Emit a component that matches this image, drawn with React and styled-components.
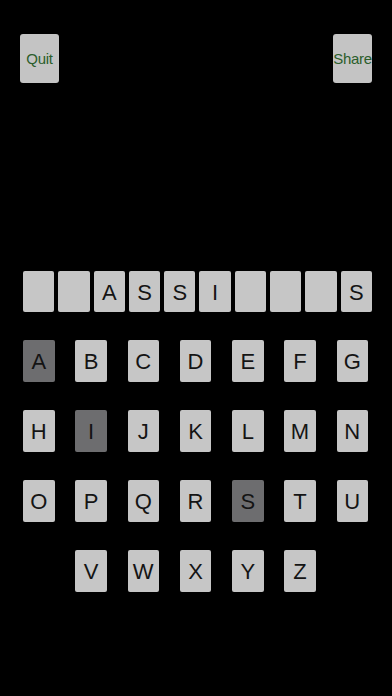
import React from "react";
import styled, { createGlobalStyle } from "styled-components";

const GlobalStyle = createGlobalStyle`
  html, body {
    margin: 0;
    padding: 0;
    background: #000;
  }
  body {
    font-family: "Liberation Sans", Arial, sans-serif;
  }
`;

const Screen = styled.div`
  width: 392px;
  min-height: 696px;
  background: #000;
  display: flex;
  flex-direction: column;
  box-sizing: border-box;
  padding-top: 34px;
`;

const TopBar = styled.div`
  display: flex;
  justify-content: space-between;
  padding: 0 20px;
`;

const BarButton = styled.button`
  width: 39px;
  height: 49px;
  padding: 0;
  border: none;
  border-radius: 3px;
  background: #c4c4c4;
  color: #2b5e2b;
  font-family: "Liberation Sans", Arial, sans-serif;
  font-size: 15px;
  letter-spacing: -0.3px;
  white-space: nowrap;
  display: flex;
  align-items: center;
  justify-content: center;
  overflow: visible;
`;

const WordRow = styled.div`
  display: flex;
  gap: 4px;
  margin-top: 188px;
  padding: 0 20px 0 23px;
`;

const Tile = styled.div`
  box-sizing: border-box;
  height: ${(p) => (p.$slot ? "41px" : "42px")};
  border-radius: 2px;
  background: ${(p) => (p.$used ? "#6d6d6f" : "#c6c6c6")};
  color: #141414;
  font-size: 22px;
  display: flex;
  align-items: center;
  justify-content: center;
  padding-top: 2px;
`;

const Slot = styled(Tile)`
  flex: 1;
`;

const Keyboard = styled.div`
  display: grid;
  grid-template-columns: repeat(7, 31.5px);
  grid-auto-rows: 42px;
  column-gap: 20.75px;
  row-gap: 28px;
  margin: 28px 0 0 23px;
`;

const Key = styled(Tile)`
  grid-column-start: ${(p) => p.$start || "auto"};
`;

const word = ["", "", "A", "S", "S", "I", "", "", "", "S"];
const used = ["A", "I", "S"];
const letters = "ABCDEFGHIJKLMNOPQRSTUVWXYZ".split("");

export default function App() {
  return (
    <>
      <GlobalStyle />
      <Screen>
        <TopBar>
          <BarButton>Quit</BarButton>
          <BarButton>Share</BarButton>
        </TopBar>
        <WordRow>
          {word.map((ch, i) => (
            <Slot key={i} $slot>
              {ch}
            </Slot>
          ))}
        </WordRow>
        <Keyboard>
          {letters.map((ch) => (
            <Key
              key={ch}
              $used={used.includes(ch)}
              $start={ch === "V" ? 2 : undefined}
            >
              {ch}
            </Key>
          ))}
        </Keyboard>
      </Screen>
    </>
  );
}
